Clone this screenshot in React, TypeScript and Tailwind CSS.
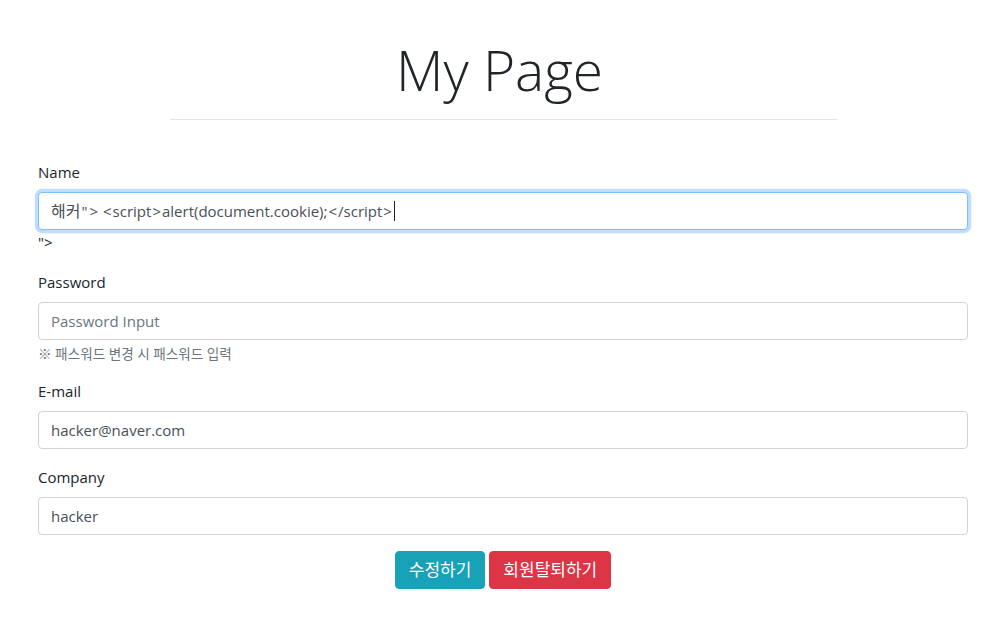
import React from "react";

const font = { fontFamily: '"Open Sans", "Noto Sans CJK KR", sans-serif' };

function Field({ label, children }: { label: string; children: React.ReactNode }) {
  return (
    <div className="mb-4">
      <div className="mb-2 text-[15px] leading-6 text-[#212529]">{label}</div>
      {children}
    </div>
  );
}

function Box({ children, focus }: { children: React.ReactNode; focus?: boolean }) {
  return (
    <div
      className={
        "flex h-[38px] items-center rounded-[4px] border bg-white px-3 text-[15px] text-[#495057] " +
        (focus
          ? "border-[#80bdff] shadow-[0_0_0_3.2px_rgba(0,123,255,0.25)]"
          : "border-[#ced4da]")
      }
    >
      {children}
    </div>
  );
}

function B({ c }: { c: string }) {
  return <span className="px-[1px]">{c}</span>;
}

export default function App() {
  return (
    <div className="min-h-[620px] bg-white" style={font}>
      <div className="pt-[36px]">
        <h1 className="text-center text-[55px] font-light leading-[67px] text-[#212529]">My Page</h1>
        <div className="ml-[170px] mt-4 h-px w-[667px] bg-[rgba(0,0,0,0.1)]" />
      </div>
      <div className="ml-[38px] mr-[31px] mt-[40px]">
        <Field label="Name">
          <Box focus>
            <span className="whitespace-pre">
              <span className="text-[16px]">해커</span>
              <B c={'"'} />
              <B c=">" />
              <span className="pl-[3px]" />
              <B c="<" />
              script
              <B c=">" />
              alert(document.cookie);
              <B c="<" />
              /script
              <B c=">" />
            </span>
            <span className="ml-px inline-block h-[20px] w-px bg-[#212529]" />
          </Box>
          <div className="text-[15px] leading-6 text-[#212529]">"&gt;</div>
        </Field>
        <Field label="Password">
          <Box>
            <span className="text-[#6c757d]">Password Input</span>
          </Box>
          <div className="mt-1 text-[13.6px] leading-[19.2px] text-[#6c757d]">※ 패스워드 변경 시 패스워드 입력</div>
        </Field>
        <Field label="E-mail">
          <Box>hacker@naver.com</Box>
        </Field>
        <Field label="Company">
          <Box>hacker</Box>
        </Field>
        <div className="flex justify-center gap-1">
          <button className="h-[38px] rounded-[4px] border border-[#17a2b8] bg-[#17a2b8] px-[13px] text-[17px] text-white">수정하기</button>
          <button className="h-[38px] rounded-[4px] border border-[#dc3545] bg-[#dc3545] px-[13px] text-[17px] text-white">회원탈퇴하기</button>
        </div>
      </div>
    </div>
  );
}
